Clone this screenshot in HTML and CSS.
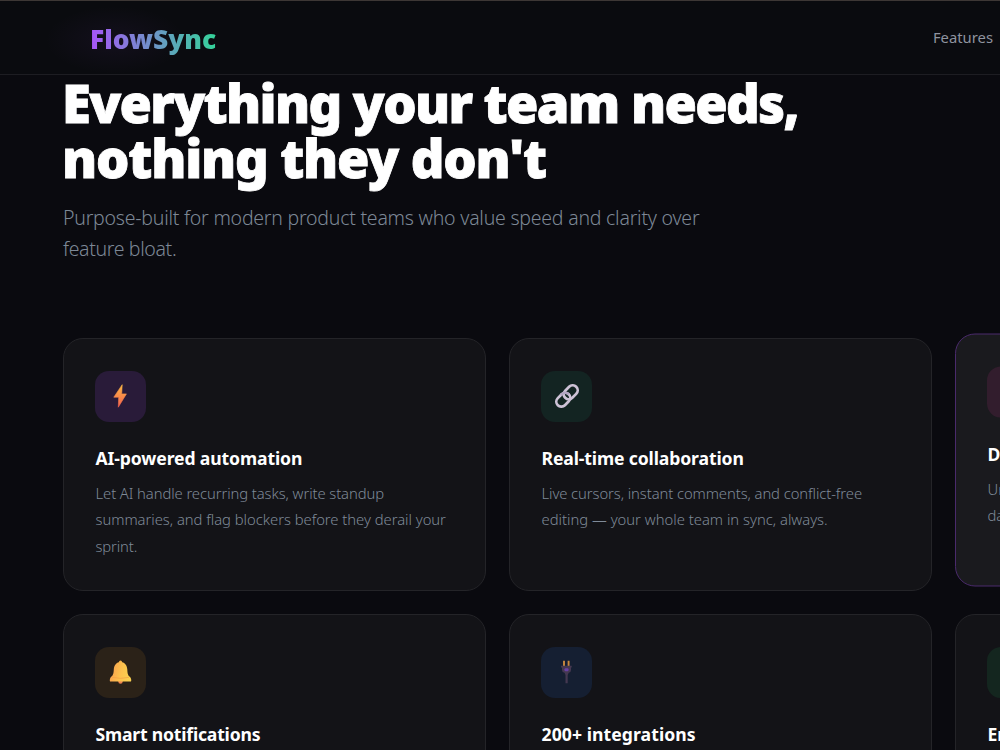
FILE: index.html
```html
<!DOCTYPE html>
<html lang="en">
<head>
<meta charset="utf-8">
<title>FlowSync</title>
<link rel="stylesheet" href="styles.css">
</head>
<body>
<header class="nav">
  <div class="logo">FlowSync</div>
  <a class="nav-link">Features</a>
</header>
<main class="features">
  <h2 class="headline"><span class="line h1">Everything your team needs,</span><span class="line h2">nothing they don't</span></h2>
  <p class="lead"><span class="line">Purpose-built for modern product teams who value speed and clarity over</span><span class="line t4">feature bloat.</span></p>
  <div class="grid">
    <article class="card">
      <div class="icon purple">
        <svg width="24" height="24" viewBox="0 0 24 24"><defs><linearGradient id="bolt" x1="0" y1="0" x2="0" y2="1"><stop offset="0" stop-color="#fbb843"/><stop offset="1" stop-color="#f5604f"/></linearGradient></defs><path d="M13.200.7 4.800 13.200H9.700L9.300 23.200 17.400 9.900H12.700Z" fill="url(#bolt)" stroke="url(#bolt)" stroke-width=".6" stroke-linejoin="round"/></svg>
      </div>
      <h3 class="title">AI-powered automation</h3>
      <p class="desc"><span class="line t1">Let AI handle recurring tasks, write standup</span><span class="line t0">summaries, and flag blockers before they derail your</span><span class="line t2">sprint.</span></p>
    </article>
    <article class="card">
      <div class="icon green">
        <svg width="24" height="24" viewBox="0 0 24 24" fill="none" stroke="#cdc2d6" stroke-width="2.700"><g transform="rotate(-45 12 12)"><rect x="-1" y="7" width="15.500" height="10" rx="5"/><rect x="9.500" y="7" width="15.500" height="10" rx="5"/><path d="M8 7h1.500a5 5 0 0 1 5 5" stroke="#b3a5c2"/></g></svg>
      </div>
      <h3 class="title t2">Real-time collaboration</h3>
      <p class="desc"><span class="line t1">Live cursors, instant comments, and conflict-free</span><span class="line">editing — your whole team in sync, always.</span></p>
    </article>
    <article class="card raised">
      <div class="icon pink"></div>
      <h3 class="title">D</h3>
      <p class="desc"><span class="line">Un</span><span class="line">da</span></p>
    </article>
    <article class="card">
      <div class="icon amber">
        <svg width="24" height="24" viewBox="0 0 24 24"><defs><linearGradient id="bell" x1="0" y1="0" x2="1" y2=".2"><stop offset="0" stop-color="#f79a4e"/><stop offset=".6" stop-color="#fcc14d"/><stop offset="1" stop-color="#f9cf4f"/></linearGradient></defs><circle cx="11.500" cy="21.500" r="2.200" fill="#ee8450"/><circle cx="11.500" cy="2.200" r="1.600" fill="#f8b64b"/><path d="M11.500 2C7.500 2 5 5.300 4.800 9.500 4.600 14 4 15.400 1.700 17.300.7 18.500.6 21.300 1.100 21.500H21.900C22.500 21.300 22.400 18.500 21.300 17.300 19 15.400 18.500 14 18.300 9.500 18.100 5.300 15.600 2 11.500 2Z" fill="url(#bell)"/><path d="M3 17.300Q11.500 19.500 20 17.300" fill="none" stroke="#f29b43" stroke-width=".6"/></svg>
      </div>
      <h3 class="title t3">Smart notifications</h3>
    </article>
    <article class="card">
      <div class="icon blue">
        <svg width="24" height="24" viewBox="0 0 24 24"><path d="M9 .8v5.200M13.600.8v5.200" stroke="#c9893f" stroke-width="1.900"/><path d="M6 5.700H16.700V7.500H16V10Q16 12.500 13.700 12.800L12.700 15V23.200H10.500V15L9.500 12.800Q7 12.500 7 10V7.500H6Z" fill="#443850"/><rect x="9.500" y="8.300" width="4" height="3" rx="1" fill="#6840a5"/></svg>
      </div>
      <h3 class="title w1">200+ integrations</h3>
    </article>
    <article class="card">
      <div class="icon emerald"></div>
      <h3 class="title">En</h3>
    </article>
  </div>
</main>
</body>
</html>
```
FILE: styles.css
```css
* { box-sizing: border-box; margin: 0; }
html, body { height: 100%; overflow: hidden; }
body { background: #0a0a0f; color: #fff; font-family: "Noto Sans", "Open Sans", sans-serif; }
.line { display: block; white-space: nowrap; }

.nav {
  height: 75px;
  padding: 0 7px 0 90px;
  display: flex;
  align-items: center;
  justify-content: space-between;
  border-top: 1px solid #3d3735;
  border-bottom: 1px solid #1d1d22;
  background: radial-gradient(ellipse 70px 34px at 115px 39px, rgba(168, 85, 247, .06), rgba(168, 85, 247, 0)) #0a0b0f;
}
.logo {
  font-size: 26.4px;
  font-weight: 900;
  line-height: 38px;
  padding-top: 3px;
  background: linear-gradient(90deg, #a855f7, #34d399);
  -webkit-background-clip: text;
  background-clip: text;
  color: transparent;
}
.nav-link { font-size: 14.8px; line-height: 24px; padding-bottom: 2px; color: #8f939f; }

.features { height: calc(100% - 75px); overflow: hidden; padding: 0 0 0 63px; }
.headline { font-size: 52.5px; font-weight: 900; line-height: 55px; margin-left: -1px; -webkit-text-stroke: .8px #fff; }
.h1 { letter-spacing: -1.68px; word-spacing: .3px; }
.h2 { letter-spacing: -1.18px; }
.lead {
  margin: 16.5px 0 72.500px 0;
  font-size: 19.5px;
  font-weight: 300;
  line-height: 31.800px;
  letter-spacing: -.23px;
  color: #7d8896;
}
.grid {
  display: grid;
  grid-template-columns: repeat(3, 423px);
  grid-auto-rows: 253px;
  gap: 23.400px 23px;
}
.card {
  padding: 32px 31px;
  border: 1px solid #242428;
  border-radius: 20px;
  background: #131317;
}
.raised { transform: translateY(-4.500px); background: #1a1a1e; border-color: #4a2a6c; }
.icon {
  width: 51px;
  height: 51px;
  border-radius: 14px;
  display: flex;
  align-items: center;
  justify-content: center;
  margin-bottom: 24px;
}
.purple { background: #291b39; }
.green { background: #132422; }
.pink { background: #321d2d; }
.amber { background: #2b2218; }
.blue { background: #151f32; }
.emerald { background: #14261f; }
.title { padding-left: .5px; font-size: 17.6px; font-weight: 700; line-height: 24px; letter-spacing: -.12px; white-space: nowrap; }
.desc { padding-left: .5px; margin-top: 10.300px; font-size: 14.8px; font-weight: 300; line-height: 26.400px; color: #7f8a98; }
.t0 { letter-spacing: -.03px; }
.t1 { letter-spacing: -.08px; }
.t2 { letter-spacing: -.13px; }
.t3 { letter-spacing: -.2px; }
.t4 { letter-spacing: -.35px; }
.w1 { letter-spacing: .07px; }
```
